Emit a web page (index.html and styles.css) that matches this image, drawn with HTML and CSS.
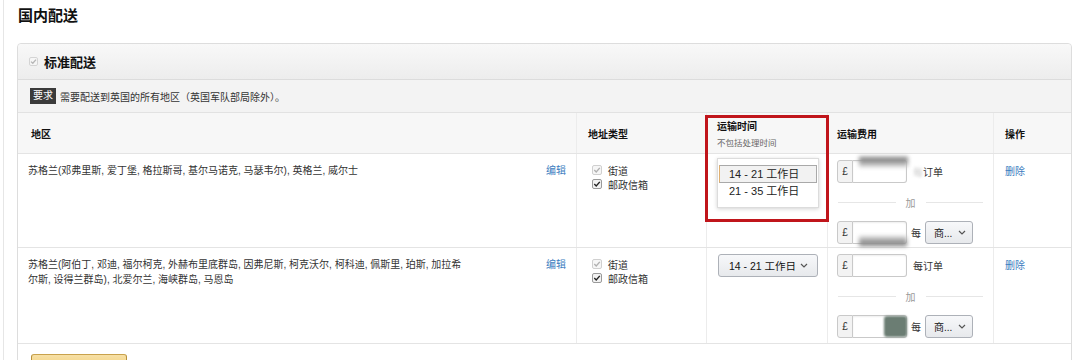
FILE: index.html
```html
<!DOCTYPE html>
<html lang="zh-CN">
<head>
    <meta charset="UTF-8">
    <title>国内配送</title>
    <link rel="stylesheet" href="styles.css">
</head>
<body>
<div class="page">
    <h1 class="title">国内配送</h1>
    <div class="panel">
        <div class="panel-head">
            <svg class="cb" width="9" height="9" viewBox="0 0 9 9"><rect x="0.5" y="0.5" width="8" height="8" rx="1.5" fill="#f6f6f6" stroke="#d4d4d4"/><path d="M2 4.6 L3.8 6.3 L7 2.6" fill="none" stroke="#b5b5b5" stroke-width="1.3"/></svg>
            <span>标准配送</span>
        </div>
        <div class="req"><span class="badge">要求</span>需要配送到英国的所有地区（英国军队部局除外）。</div>
        <div class="grid">
            <div class="row head">
                <div class="cell">地区</div>
                <div class="cell">地址类型</div>
                <div class="cell">运输时间<span class="sub">不包括处理时间</span></div>
                <div class="cell">运输费用</div>
                <div class="cell">操作</div>
            </div>

            <div class="row r1">
                <div class="cell region">
                    <span class="names">苏格兰(邓弗里斯, 爱丁堡, 格拉斯哥, 基尔马诺克, 马瑟韦尔), 英格兰, 威尔士</span>
                    <a class="link">编辑</a>
                </div>
                <div class="cell addr">
                    <div class="opt"><svg class="cb" width="10" height="10" viewBox="0 0 10 10"><rect x="0.5" y="0.5" width="9" height="9" rx="1.5" fill="#f6f6f6" stroke="#d0d0d0"/><path d="M2.3 5.1 L4.2 7 L7.8 2.9" fill="none" stroke="#b0b0b0" stroke-width="1.4"/></svg>街道</div>
                    <div class="opt"><svg class="cb" width="10" height="10" viewBox="0 0 10 10"><rect x="0.5" y="0.5" width="9" height="9" rx="1.5" fill="#f2f2f2" stroke="#9a9a9a"/><path d="M2.3 5.1 L4.2 7 L7.8 2.9" fill="none" stroke="#222" stroke-width="1.4"/></svg>邮政信箱</div>
                </div>
                <div class="cell time">
                    <div class="list">
                        <div class="item on">14 - 21 工作日</div>
                        <div class="item">21 - 35 工作日</div>
                    </div>
                </div>
                <div class="cell fee">
                    <div class="line">
                        <div class="group"><span class="addon">£</span><span class="inp"><span class="smear top"></span></span></div>
                        <span><span class="gone">每</span>订单</span>
                    </div>
                    <div class="plus">加</div>
                    <div class="line tight">
                        <div class="group"><span class="addon">£</span><span class="inp"><span class="smear bottom"></span></span></div>
                        <span>每</span>
                        <div class="select small">商...<svg width="8" height="5" viewBox="0 0 8 5"><path d="M1 1 L4 4 L7 1" fill="none" stroke="#555" stroke-width="1.2"/></svg></div>
                    </div>
                </div>
                <div class="cell act"><a class="link">删除</a></div>
            </div>

            <div class="row r2">
                <div class="cell region">
                    <span class="names">苏格兰(阿伯丁, 邓迪, 福尔柯克, 外赫布里底群岛, 因弗尼斯, 柯克沃尔, 柯科迪, 佩斯里, 珀斯, 加拉希尔斯, 设得兰群岛), 北爱尔兰, 海峡群岛, 马恩岛</span>
                    <a class="link">编辑</a>
                </div>
                <div class="cell addr">
                    <div class="opt"><svg class="cb" width="10" height="10" viewBox="0 0 10 10"><rect x="0.5" y="0.5" width="9" height="9" rx="1.5" fill="#f6f6f6" stroke="#d0d0d0"/><path d="M2.3 5.1 L4.2 7 L7.8 2.9" fill="none" stroke="#b0b0b0" stroke-width="1.4"/></svg>街道</div>
                    <div class="opt"><svg class="cb" width="10" height="10" viewBox="0 0 10 10"><rect x="0.5" y="0.5" width="9" height="9" rx="1.5" fill="#f2f2f2" stroke="#9a9a9a"/><path d="M2.3 5.1 L4.2 7 L7.8 2.9" fill="none" stroke="#222" stroke-width="1.4"/></svg>邮政信箱</div>
                </div>
                <div class="cell time">
                    <div class="select">14 - 21 工作日<svg width="8" height="5" viewBox="0 0 8 5"><path d="M1 1 L4 4 L7 1" fill="none" stroke="#555" stroke-width="1.2"/></svg></div>
                </div>
                <div class="cell fee">
                    <div class="line">
                        <div class="group"><span class="addon">£</span><span class="inp"></span></div>
                        <span>每订单</span>
                    </div>
                    <div class="plus">加</div>
                    <div class="line tight">
                        <div class="group"><span class="addon">£</span><span class="inp"><span class="smear block"></span></span></div>
                        <span>每</span>
                        <div class="select small">商...<svg width="8" height="5" viewBox="0 0 8 5"><path d="M1 1 L4 4 L7 1" fill="none" stroke="#555" stroke-width="1.2"/></svg></div>
                    </div>
                </div>
                <div class="cell act"><a class="link">删除</a></div>
            </div>

            <div class="mark"></div>
        </div>
        <div class="foot">
            <button class="add" aria-label="添加新配送区域"></button>
        </div>
    </div>
</div>
</body>
</html>
```

FILE: styles.css
```css
body {
    margin: 0;
    background: #fff;
    color: #333;
    font-family: "Liberation Sans", "Noto Sans CJK SC", sans-serif;
    font-size: 10px;
}

.page {
    margin-left: 3px;
    border-left: 1px solid #e6e6e6;
    padding: 6px 8px 0 13px;
    min-height: 360px;
    box-sizing: border-box;
}

.title {
    margin: 0 0 17px 1px;
    font-size: 15px;
    line-height: 20px;
    font-weight: bold;
    color: #111;
}

.panel {
    border: 1px solid #ddd;
    border-radius: 4px 4px 0 0;
}

.panel-head {
    height: 36px;
    box-sizing: border-box;
    display: flex;
    align-items: center;
    gap: 6px;
    padding-left: 11px;
    background: linear-gradient(#f8f8f8, #ededed);
    border-bottom: 1px solid #dcdcdc;
    border-radius: 4px 4px 0 0;
    font-size: 13px;
    font-weight: bold;
    color: #111;
}

.req {
    height: 33px;
    box-sizing: border-box;
    display: flex;
    align-items: center;
    gap: 4px;
    padding-left: 12px;
    background: #f3f3f3;
    border-bottom: 1px solid #e2e2e2;
}

.badge {
    background: #3b3b3b;
    color: #fff;
    padding: 2px 3px;
    line-height: 12px;
}

.grid {
    position: relative;
}

.row {
    display: grid;
    grid-template-columns: 558px 130px 121px 166px 77px;
    border-bottom: 1px solid #e4e4e4;
    box-sizing: border-box;
}

.cell {
    box-sizing: border-box;
}

.row .cell + .cell {
    border-left: 1px solid #ececec;
}

.head {
    height: 41px;
    background: #f7f7f7;
    font-weight: bold;
    color: #111;
}

.head .cell {
    display: flex;
    flex-direction: column;
    justify-content: center;
    padding: 0 11px;
}

.head .cell:first-child {
    padding-left: 13px;
}

.head .cell:nth-child(3) {
    padding-left: 10px;
}

.head .cell:nth-child(4) {
    padding-left: 9px;
}

.sub {
    margin-top: 3px;
    font-size: 8.5px;
    font-weight: normal;
    color: #666;
}

.r1 {
    height: 94px;
}

.r2 {
    height: 96px;
}

.region {
    display: flex;
    justify-content: space-between;
    align-items: flex-start;
    padding: 9px 10px 0 10px;
    line-height: 15px;
}

.names {
    max-width: 438px;
}

.link {
    color: #3a7cc0;
    cursor: pointer;
}

.addr {
    padding: 9px 0 0 15px;
}

.opt {
    display: flex;
    align-items: center;
    gap: 6px;
    height: 14px;
}

.time {
    padding: 6px 0 0 11px;
}

.list {
    width: 102px;
    margin: -2px 0 0 -1px;
    padding: 6px 1px 6px 1px;
    box-sizing: border-box;
    background: #fff;
    border: 1px solid #dcdcdc;
    box-shadow: 0 1px 4px rgba(0, 0, 0, 0.18);
    font-size: 11px;
}

.item {
    height: 18px;
    line-height: 17px;
    padding-left: 10px;
    box-sizing: border-box;
    color: #222;
}

.item.on {
    background: #f2f2f2;
    border: 1px solid #a9a9a9;
    border-left-color: #e0b070;
    padding-left: 9px;
}

.select {
    display: flex;
    align-items: center;
    justify-content: space-between;
    width: 100px;
    height: 23px;
    box-sizing: border-box;
    padding: 0 9px 0 10px;
    border: 1px solid #adb1b8;
    border-radius: 3px;
    background: linear-gradient(#f7f8fa, #e7e9ec);
    font-size: 10.5px;
    color: #111;
}

.select.small {
    width: 48px;
    padding: 0 6px 0 8px;
    font-size: 10px;
}

.fee {
    padding: 6px 9px 0 9px;
}

.line {
    display: flex;
    align-items: center;
    gap: 6px;
}

.line.tight {
    gap: 4px;
}

.group {
    display: flex;
    height: 23px;
}

.addon {
    width: 16px;
    box-sizing: border-box;
    display: flex;
    align-items: center;
    justify-content: center;
    background: #f3f3f3;
    border: 1px solid #c9c9c9;
    border-radius: 3px 0 0 3px;
    color: #333;
}

.inp {
    position: relative;
    width: 54px;
    box-sizing: border-box;
    border: 1px solid #c9c9c9;
    border-left: none;
    border-radius: 0 3px 3px 0;
    background: #fff;
    box-shadow: inset 0 1px 2px rgba(0, 0, 0, 0.07);
}

.smear {
    position: absolute;
    filter: blur(2px);
}

.smear.top {
    left: 6px;
    right: -2px;
    top: -4px;
    height: 10px;
    background: linear-gradient(#6f6f6f, #d8d8d8);
}

.smear.bottom {
    left: 6px;
    right: -1px;
    bottom: -3px;
    height: 10px;
    background: linear-gradient(#d8d8d8, #6f6f6f);
}

.smear.block {
    left: 31px;
    right: -1px;
    top: 0;
    bottom: 0;
    background: #6b7d73;
    border-radius: 3px;
    filter: blur(1.2px);
}

.gone {
    color: #ccc;
    filter: blur(1.5px);
}

.plus {
    display: flex;
    align-items: center;
    height: 38px;
    margin: 0 1px;
    color: #999;
}

.plus::before,
.plus::after {
    content: "";
    flex: 1;
    border-top: 1px solid #e6e6e6;
}

.plus::before {
    margin-right: 10px;
}

.plus::after {
    margin-left: 10px;
}

.act {
    padding: 9px 0 0 11px;
}

.mark {
    position: absolute;
    left: 687px;
    top: 2px;
    width: 124px;
    height: 107px;
    box-sizing: border-box;
    border: 3px solid #c0151b;
    pointer-events: none;
}

.foot {
    padding: 10px 0 0 13px;
}

.add {
    display: block;
    width: 96px;
    height: 29px;
    border: 1px solid;
    border-color: #c9a24c #b8913a #a88734;
    border-radius: 3px;
    background: linear-gradient(#f7e0a6, #f0c14b);
}
```
